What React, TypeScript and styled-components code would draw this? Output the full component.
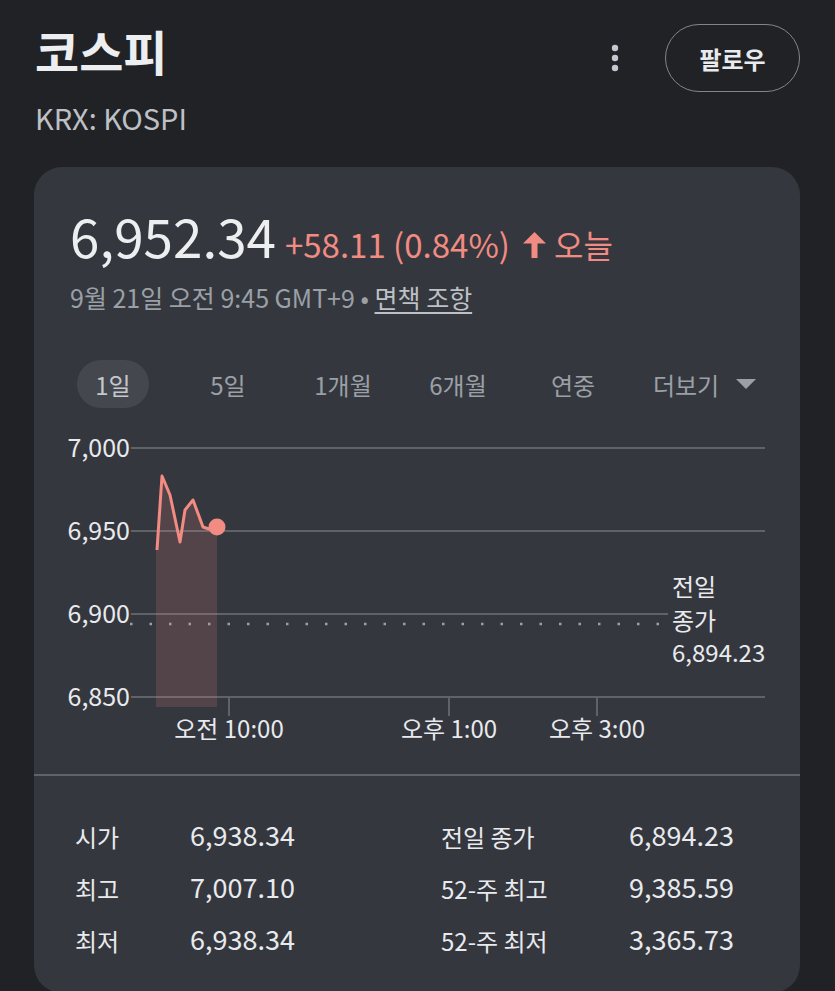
import React from 'react';
import styled, { createGlobalStyle } from 'styled-components';

const FONT = `"Noto Sans CJK KR", "Noto Sans", sans-serif`;

const GlobalStyle = createGlobalStyle`
  body {
    margin: 0;
    background: #212226;
    font-family: ${FONT};
    color: #e8eaed;
  }
`;

const RANGES = ['1일', '5일', '1개월', '6개월', '연중'];

const STATS = [
  ['시가', '6,938.34', '전일 종가', '6,894.23'],
  ['최고', '7,007.10', '52-주 최고', '9,385.59'],
  ['최저', '6,938.34', '52-주 최저', '3,365.73'],
];

// chart coords are relative to the card's left edge / the svg top
const GRID = [
  { y: 23, label: '7,000', end: 731 },
  { y: 106, label: '6,950', end: 731 },
  { y: 189, label: '6,900', end: 634 },
  { y: 272, label: '6,850', end: 731 },
];

const LINE = [
  [123, 125],
  [128, 51],
  [136, 70],
  [146, 117],
  [151, 85],
  [159, 75],
  [169, 102],
  [175, 104],
  [183, 102],
];

const TICKS = [
  { x: 195, label: '오전 10:00' },
  { x: 415, label: '오후 1:00' },
  { x: 563, label: '오후 3:00' },
];

const PREV_CLOSE = [
  { y: 171, text: '전일' },
  { y: 205, text: '종가' },
  { y: 237, text: '6,894.23' },
];

function MoreIcon() {
  return (
    <svg width="24" height="30" viewBox="0 0 24 30">
      <circle cx="12" cy="5" r="3.2" fill="#c4c7d0" />
      <circle cx="12" cy="15" r="3.2" fill="#c4c7d0" />
      <circle cx="12" cy="25" r="3.2" fill="#c4c7d0" />
    </svg>
  );
}

function UpArrow() {
  return (
    <ArrowSvg width="23" height="26" viewBox="0 0 23 26">
      <polygon points="11.5,0 23,11.5 0,11.5" fill="#f28b82" />
      <rect x="8.5" y="10" width="6" height="16" fill="#f28b82" />
    </ArrowSvg>
  );
}

function Chart() {
  const pts = LINE.map(([x, y]) => `${x},${y}`).join(' ');
  const area = `${pts} 183,282 122,282 122,125`;
  const last = LINE[LINE.length - 1];

  return (
    <ChartSvg width="766" height="320" viewBox="0 0 766 320">
      {GRID.map((g) => (
        <g key={g.label}>
          <line x1="97" x2={g.end} y1={g.y} y2={g.y} stroke="#5f6368" strokeWidth="2" />
          <text x="96" y={g.y + 9} textAnchor="end" fontSize="25" fill="#e8eaed">
            {g.label}
          </text>
        </g>
      ))}
      <line
        x1="96"
        x2="628"
        y1="199"
        y2="199"
        stroke="#9aa0a6"
        strokeWidth="2.5"
        strokeDasharray="2.5 17"
      />
      <polygon points={area} fill="rgba(242, 139, 130, 0.16)" />
      <polyline
        points={pts}
        fill="none"
        stroke="#f28b82"
        strokeWidth="3"
        strokeLinejoin="round"
      />
      <circle cx={last[0]} cy={last[1]} r="8.5" fill="#f28b82" />
      {TICKS.map((t) => (
        <g key={t.label}>
          <line x1={t.x} x2={t.x} y1="272" y2="291" stroke="#5f6368" strokeWidth="2" />
          <text x={t.x} y="313" textAnchor="middle" fontSize="24" fill="#e8eaed">
            {t.label}
          </text>
        </g>
      ))}
      {PREV_CLOSE.map((p) => (
        <text key={p.text} x="638" y={p.y} fontSize="24" fill="#e8eaed">
          {p.text}
        </text>
      ))}
    </ChartSvg>
  );
}

export default function App() {
  return (
    <>
      <GlobalStyle />
      <Page>
        <Header>
          <div>
            <Title>코스피</Title>
            <Ticker>KRX: KOSPI</Ticker>
          </div>
          <Actions>
            <MoreIcon />
            <FollowButton type="button">팔로우</FollowButton>
          </Actions>
        </Header>

        <Card>
          <Summary>
            <PriceRow>
              <Price>6,952.34</Price>
              <Change>+58.11 (0.84%)</Change>
              <UpArrow />
              <Today>오늘</Today>
            </PriceRow>
            <DateLine>
              9월 21일 오전 9:45 GMT+9 • <Disclaimer>면책 조항</Disclaimer>
            </DateLine>
          </Summary>

          <Tabs>
            {RANGES.map((r, i) => (
              <Tab key={r} $active={i === 0}>
                {r}
              </Tab>
            ))}
            <Tab>
              더보기
              <svg width="20" height="10" viewBox="0 0 20 10">
                <polygon points="0,0 20,0 10,10" fill="#9aa0a6" />
              </svg>
            </Tab>
          </Tabs>

          <Chart />

          <Divider />

          <Stats>
            {STATS.map(([l1, v1, l2, v2]) => (
              <React.Fragment key={l1}>
                <StatLabel>{l1}</StatLabel>
                <StatValue>{v1}</StatValue>
                <StatLabel>{l2}</StatLabel>
                <StatValue>{v2}</StatValue>
              </React.Fragment>
            ))}
          </Stats>
        </Card>
      </Page>
    </>
  );
}

const Page = styled.div`
  padding: 24px 35px 0 34px;
`;

const Header = styled.header`
  display: flex;
  justify-content: space-between;
  align-items: flex-start;
`;

const Title = styled.h1`
  margin: 0 0 0 1px;
  font-size: 48px;
  line-height: 52px;
  font-weight: 700;
  color: #eceef0;
`;

const Ticker = styled.div`
  margin-top: 21px;
  font-size: 29px;
  line-height: 40px;
  color: #bdc1c6;
  padding-left: 1px;
`;

const Actions = styled.div`
  display: flex;
  align-items: center;
  gap: 38px;
`;

const FollowButton = styled.button`
  width: 135px;
  height: 68px;
  border: 1.5px solid #80868b;
  border-radius: 34px;
  background: transparent;
  color: #e8eaed;
  font-family: ${FONT};
  font-size: 24px;
  font-weight: 700;
`;

const Card = styled.section`
  margin-top: 30px;
  height: 826px;
  padding-top: 33px;
  box-sizing: border-box;
  background: #35373e;
  border-radius: 28px;
  overflow: hidden;
`;

const Summary = styled.div`
  padding: 0 36px;
`;

const PriceRow = styled.div`
  display: flex;
  align-items: baseline;
  height: 70px;
`;

const Price = styled.span`
  font-size: 53px;
  line-height: 70px;
  color: #eceef0;
`;

const Change = styled.span`
  margin-left: 9px;
  font-size: 33px;
  color: #f28b82;
`;

const ArrowSvg = styled.svg`
  margin-left: 13px;
  margin-bottom: 2px;
`;

const Today = styled.span`
  margin-left: 8px;
  font-size: 32px;
  color: #f28b82;
`;

const DateLine = styled.div`
  margin-top: 10px;
  font-size: 25px;
  line-height: 34px;
  color: #9aa0a6;
`;

const Disclaimer = styled.span`
  color: #bdc1c6;
  text-decoration: underline;
  text-underline-offset: 4px;
`;

const Tabs = styled.div`
  display: grid;
  grid-template-columns: repeat(5, 115px) 1fr;
  align-items: center;
  margin-top: 46px;
  padding: 0 21.5px;
`;

const Tab = styled.div<{ $active?: boolean }>`
  justify-self: center;
  display: flex;
  align-items: center;
  gap: 17px;
  height: 48px;
  padding: 0 18px;
  border-radius: 24px;
  font-size: 24px;
  color: ${({ $active }) => ($active ? '#c4c7cc' : '#9aa0a6')};
  background: ${({ $active }) => ($active ? '#45474e' : 'transparent')};
`;

const ChartSvg = styled.svg`
  display: block;
  margin-top: 17px;
  font-family: ${FONT};
`;

const Divider = styled.div`
  margin-top: 29px;
  height: 2px;
  background: #5f6368;
`;

const Stats = styled.div`
  display: grid;
  grid-template-columns: 115px 251px 188px auto;
  grid-auto-rows: 52px;
  align-items: center;
  padding: 32px 0 0 41px;
`;

const StatLabel = styled.span`
  font-size: 24px;
  padding-top: 4px;
  color: #e8eaed;
`;

const StatValue = styled.span`
  font-size: 27px;
  color: #e8eaed;
`;
